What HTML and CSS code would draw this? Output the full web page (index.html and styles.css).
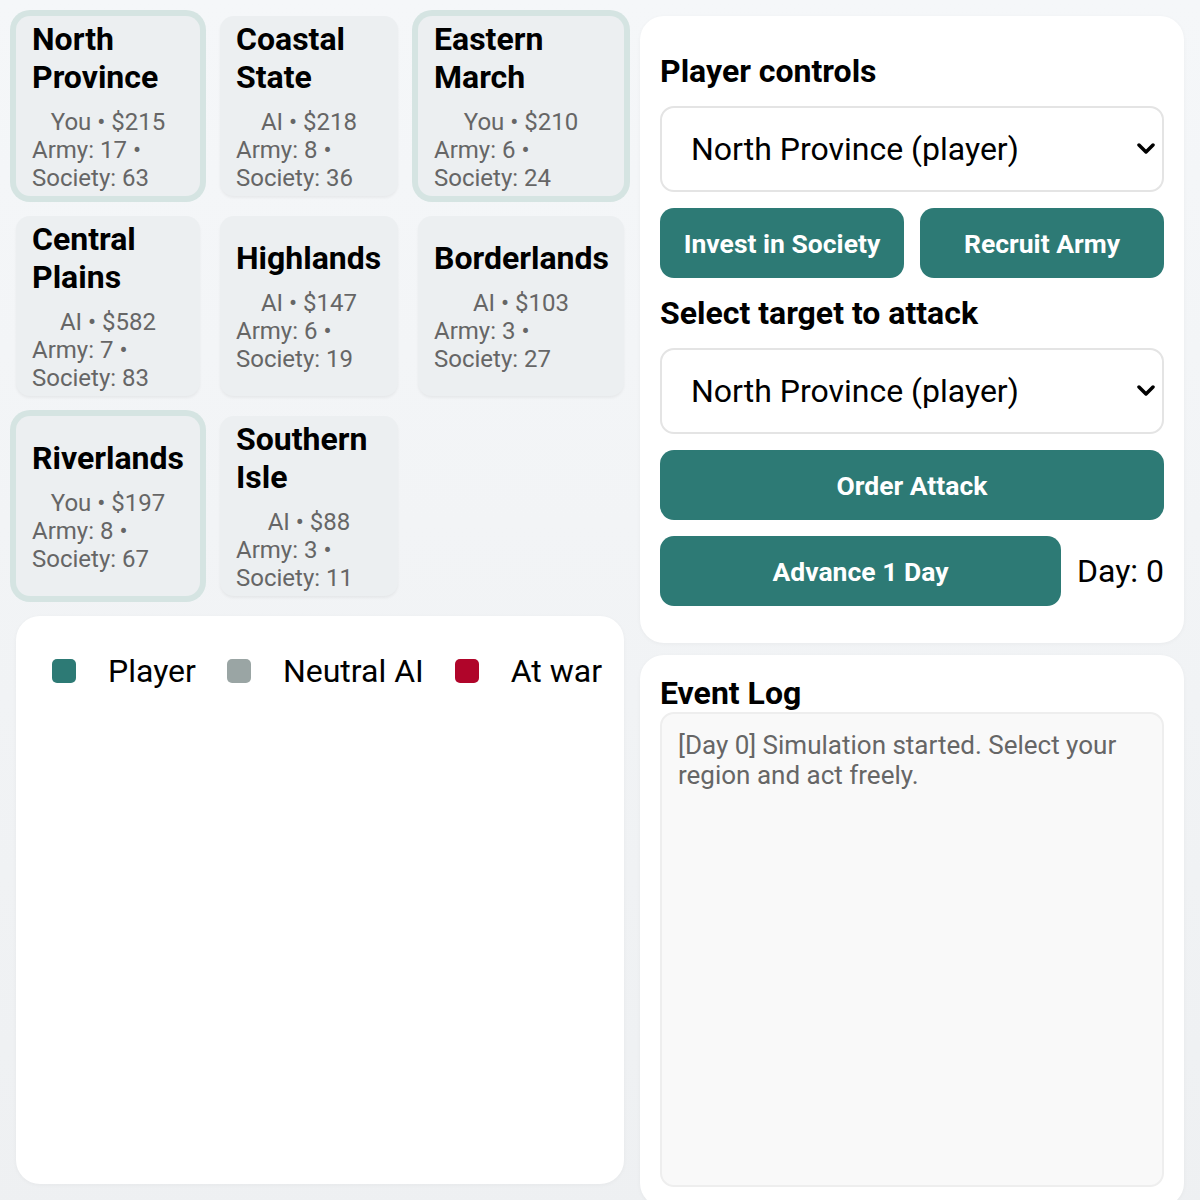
FILE: index.html
```html
<!DOCTYPE html>
<html lang="en">
<head>
    <meta charset="UTF-8">
    <meta name="viewport" content="width=device-width, initial-scale=1.0">
    <title>Regions</title>
    <link rel="stylesheet" href="styles.css">
</head>
<body>
<div class="layout">
    <div class="left">
        <div class="regions">
            <div class="region player">
                <h3>North Province</h3>
                <div class="stats"><span>You • $215</span><span>Army: 17 • Society: 63</span></div>
            </div>
            <div class="region">
                <h3>Coastal State</h3>
                <div class="stats"><span>AI • $218</span><span>Army: 8 • Society: 36</span></div>
            </div>
            <div class="region player">
                <h3>Eastern March</h3>
                <div class="stats"><span>You • $210</span><span>Army: 6 • Society: 24</span></div>
            </div>
            <div class="region">
                <h3>Central Plains</h3>
                <div class="stats"><span>AI • $582</span><span>Army: 7 • Society: 83</span></div>
            </div>
            <div class="region">
                <h3>Highlands</h3>
                <div class="stats"><span>AI • $147</span><span>Army: 6 • Society: 19</span></div>
            </div>
            <div class="region">
                <h3>Borderlands</h3>
                <div class="stats"><span>AI • $103</span><span>Army: 3 • Society: 27</span></div>
            </div>
            <div class="region player">
                <h3>Riverlands</h3>
                <div class="stats"><span>You • $197</span><span>Army: 8 • Society: 67</span></div>
            </div>
            <div class="region">
                <h3>Southern Isle</h3>
                <div class="stats"><span>AI • $88</span><span>Army: 3 • Society: 11</span></div>
            </div>
        </div>
        <div class="panel map">
            <div class="legend">
                <span class="legend-item"><span class="swatch swatch-player"></span>Player</span>
                <span class="legend-item"><span class="swatch swatch-ai"></span>Neutral AI</span>
                <span class="legend-item"><span class="swatch swatch-war"></span>At war</span>
            </div>
        </div>
    </div>
    <div class="right">
        <div class="panel controls">
            <h2>Player controls</h2>
            <div class="select-wrap">
                <select id="playerRegion">
                    <option>North Province (player)</option>
                    <option>Eastern March (player)</option>
                    <option>Riverlands (player)</option>
                </select>
                <svg class="chevron" width="18" height="12" viewBox="0 0 18 12"><polyline points="2,2 9,9 16,2" fill="none" stroke="#000" stroke-width="3.5" stroke-linecap="round" stroke-linejoin="round"/></svg>
            </div>
            <div class="button-row">
                <button>Invest in Society</button>
                <button>Recruit Army</button>
            </div>
            <h2>Select target to attack</h2>
            <div class="select-wrap">
                <select id="targetRegion">
                    <option>North Province (player)</option>
                    <option>Coastal State</option>
                    <option>Central Plains</option>
                </select>
                <svg class="chevron" width="18" height="12" viewBox="0 0 18 12"><polyline points="2,2 9,9 16,2" fill="none" stroke="#000" stroke-width="3.5" stroke-linecap="round" stroke-linejoin="round"/></svg>
            </div>
            <button>Order Attack</button>
            <div class="day-row">
                <button>Advance 1 Day</button>
                <span class="day">Day: 0</span>
            </div>
        </div>
        <div class="panel log-panel">
            <h2>Event Log</h2>
            <div class="log">[Day 0] Simulation started. Select your region and act freely.</div>
        </div>
    </div>
</div>
</body>
</html>
```

FILE: styles.css
```css
body {
    font-family: Roboto, "Liberation Sans", sans-serif;
    background: linear-gradient(180deg, #f5f7f9, #eef0f2);
    margin: 0;
    padding: 0;
    color: #000;
}
.layout {
    display: grid;
    grid-template-columns: 608px 544px;
    gap: 16px;
    padding: 16px;
}
.left {
    display: flex;
    flex-direction: column;
    gap: 20px;
}
.regions {
    display: grid;
    grid-template-columns: 184px 178px 206px;
    grid-auto-rows: 180px;
    gap: 20px;
}
.region {
    background-color: #eceff1;
    border-radius: 14px;
    padding: 0 16px;
    display: flex;
    flex-direction: column;
    justify-content: center;
    box-shadow: 0 2px 3px rgba(0, 0, 0, 0.05);
}
.region.player {
    box-shadow: 0 0 0 6px #d5e4e2, 0 3px 4px rgba(0, 0, 0, 0.05);
}
.region h3 {
    font-size: 32px;
    margin: 0 0 12px;
}
.stats {
    display: flex;
    flex-wrap: wrap;
    justify-content: center;
    font-size: 24px;
    color: #666;
}
.panel {
    background-color: #ffffff;
    border-radius: 24px;
    box-shadow: 0 1px 4px rgba(0, 0, 0, 0.04);
}
.map {
    height: 568px;
    padding: 36px;
    box-sizing: border-box;
}
.legend {
    display: flex;
    gap: 31px;
    font-size: 32px;
    white-space: nowrap;
}
.legend-item {
    display: flex;
    align-items: center;
    gap: 32px;
    flex-shrink: 0;
}
.swatch {
    width: 24px;
    height: 24px;
    border-radius: 5px;
    flex-shrink: 0;
}
.swatch-player {
    background-color: #2d7a75;
}
.swatch-ai {
    background-color: #9aa5a4;
}
.swatch-war {
    background-color: #b0052a;
}
.right {
    display: flex;
    flex-direction: column;
    gap: 12px;
}
.controls {
    display: flex;
    flex-direction: column;
    gap: 16px;
    padding: 36px 20px 37px;
}
h2 {
    font-size: 32px;
    margin: 0;
}
.select-wrap {
    position: relative;
}
select {
    display: block;
    width: 100%;
    height: 86px;
    font-family: inherit;
    font-size: 32px;
    color: #000;
    background-color: #fff;
    border: 2px solid #e4e4e4;
    border-radius: 14px;
    padding: 0 48px 0 29px;
    appearance: none;
    -webkit-appearance: none;
}
.chevron {
    position: absolute;
    right: 9px;
    top: 37px;
    pointer-events: none;
}
button {
    height: 70px;
    font-family: inherit;
    font-size: 26.5px;
    font-weight: bold;
    color: #fff;
    background-color: #2d7a75;
    border: none;
    border-radius: 14px;
    cursor: pointer;
}
.button-row {
    display: flex;
    gap: 16px;
}
.button-row button {
    flex: 1;
}
.day-row {
    display: flex;
    align-items: center;
    gap: 16px;
}
.day-row button {
    flex: 1;
}
.day {
    font-size: 32px;
}
.log-panel {
    padding: 19px 20px 20px;
}
.log {
    height: 475px;
    box-sizing: border-box;
    background-color: #f9f9f9;
    border: 2px solid #eeeeee;
    border-radius: 14px;
    padding: 16px 16px;
    font-size: 26px;
    color: #666;
}
```
